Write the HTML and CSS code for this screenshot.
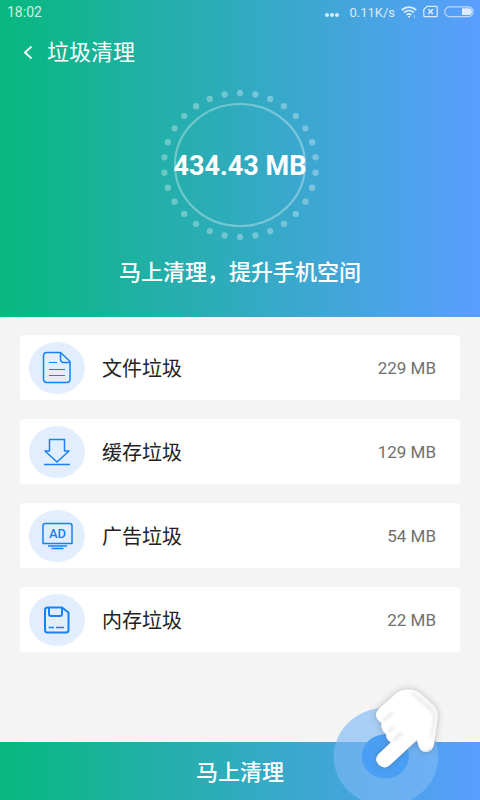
FILE: index.html
```html
<!DOCTYPE html>
<html lang="zh-CN">
<head>
<meta charset="utf-8">
<meta name="viewport" content="width=device-width, initial-scale=1">
<title>垃圾清理</title>
<link rel="stylesheet" href="styles.css">
</head>
<body>
<div class="screen">
  <header class="hero">
    <div class="status">
      <span>18:02</span>
      <div class="status-right">
        <svg class="more" width="14" height="16" viewBox="0 0 14 16" fill="currentColor"><circle cx="2" cy="11" r="2"/><circle cx="7" cy="11" r="2"/><circle cx="12" cy="11" r="2"/></svg>
        <span class="speed">0.11K/s</span>
        <svg width="16" height="14" viewBox="0 0 16 14" fill="none" stroke="currentColor" stroke-width="1.7"><path d="M.8 5C5 1.200 11 1.200 15.200 5M3.200 7.500c2.800-2.500 6.800-2.500 9.600 0M5.600 9.900c1.400-1.200 3.400-1.200 4.800 0"/><path d="M6.500 11h3L8 13z" fill="currentColor" stroke="none"/><path d="M13.500 10v3" stroke-width="1" opacity=".6"/></svg>
        <svg width="15" height="14" viewBox="0 0 15 14" fill="none" stroke="currentColor" stroke-width="1.200"><path d="M4 1.300h9.200q1 0 1 1v8.400q0 1-1 1H1.800q-1 0-1-1V4.500z"/><path d="M5.300 4.300l4.600 4.600M9.900 4.300L5.300 8.900" stroke-width="1.500"/></svg>
        <svg width="30" height="14" viewBox="0 0 30 14"><rect x=".8" y="1.800" width="28.400" height="9.800" rx="4.900" fill="none" stroke="currentColor" stroke-width="1.200" opacity=".75"/><path d="M18 3.300h6.500a3.400 3.400 0 010 6.800H18z" fill="currentColor"/></svg>
      </div>
    </div>
    <div class="title-bar">
      <a class="back" href="#" aria-label="返回"><svg width="10" height="14" viewBox="0 0 10 14" fill="none" stroke="currentColor" stroke-width="1.800"><path d="M8.500 .5L2 6.500l6.500 6"/></svg></a>
      <h1>垃圾清理</h1>
    </div>
    <div class="gauge">
      <svg class="ring" viewBox="0 0 160 150" fill="none" stroke="#fff">
        <ellipse cx="80" cy="75" rx="76" ry="72" pathLength="30" stroke-width="6.300" stroke-linecap="round" stroke-dasharray="0 1" stroke-dashoffset=".5" opacity=".32"/>
        <ellipse cx="80" cy="75" rx="65" ry="61" stroke-width="2.200" opacity=".33"/>
      </svg>
      <strong>434.43 MB</strong>
    </div>
    <p class="tagline">马上清理，提升手机空间</p>
  </header>
  <main>
    <ul class="list">
      <li class="card">
        <span class="badge"><svg viewBox="0 0 56 52"><path d="M18 10.500h13.500l9.500 9v17.500q0 3.500-3.500 3.500H18q-3.500 0-3.500-3.500V14q0-3.500 3.500-3.500z"/><path d="M31.500 10.500V17q0 3.500 3.500 3.500h6"/><path class="thin" d="M20 20.500h8M20 27.500h16M20 33.500h16"/></svg></span>
        <span class="name">文件垃圾</span><span class="size">229 MB</span>
      </li>
      <li class="card">
        <span class="badge"><svg viewBox="0 0 56 52"><path d="M20.500 13.500h15V25h4.500L28 36 16 25h4.500zM15 38.500h26"/></svg></span>
        <span class="name">缓存垃圾</span><span class="size">129 MB</span>
      </li>
      <li class="card">
        <span class="badge"><svg viewBox="0 0 56 52"><path d="M16.500 13.500h24q2.500 0 2.500 2.500v17.500H14V16q0-2.500 2.500-2.500zM19 36h19M22.500 38.500h12"/><text x="28.500" y="28" text-anchor="middle">AD</text></svg></span>
        <span class="name">广告垃圾</span><span class="size">54 MB</span>
      </li>
      <li class="card">
        <span class="badge"><svg viewBox="0 0 56 52"><path class="bold" d="M18.500 13.500H33l6.500 5V36q0 2.500-2.500 2.500H18.500Q16 38.500 16 36V16q0-2.500 2.500-2.500z"/><path class="bold" d="M20 13.500V20q0 2 2 2h9q2 0 2-2v-6.500"/><path d="M19.500 33.500H25M27 33.500h8"/></svg></span>
        <span class="name">内存垃圾</span><span class="size">22 MB</span>
      </li>
    </ul>
  </main>
  <footer class="footer">
    <button class="clean" type="button">马上清理</button>
    <svg class="pointer" viewBox="0 0 480 390" aria-hidden="true">
      <defs>
        <linearGradient id="skin" x1="0" y1="1" x2="1" y2="0"><stop offset="0" stop-color="#fff"/><stop offset=".75" stop-color="#fff"/><stop offset="1" stop-color="#f0f0f0"/></linearGradient>
        <filter id="shadow" x="-20%" y="-20%" width="140%" height="140%"><feDropShadow dx="0" dy="0" stdDeviation="9" flood-color="#555" flood-opacity=".4"/></filter>
        <filter id="soft" x="-30%" y="-30%" width="160%" height="160%"><feGaussianBlur stdDeviation="5"/></filter>
        <clipPath id="hand-clip"><path d="M175 253L213 217Q198 210 198 191Q182 181 184 158Q168 150 168 132Q169 123 177 116L230 69Q240 61 253 59L276 59Q289 60 298 68L340 105Q354 118 353 139L342 223Q338 245 318 246Q300 245 296 228L291 210L211 284Q194 300 177 285Q161 269 175 253Z"/></clipPath>
      </defs>
      <ellipse cx="198" cy="260" rx="157" ry="147" fill="#7db8f5" opacity=".64"/>
      <ellipse cx="196" cy="259" rx="71" ry="66" fill="#4a9ff5"/>
      <path filter="url(#shadow)" fill="url(#skin)" d="M175 253L213 217Q198 210 198 191Q182 181 184 158Q168 150 168 132Q169 123 177 116L230 69Q240 61 253 59L276 59Q289 60 298 68L340 105Q354 118 353 139L342 223Q338 245 318 246Q300 245 296 228L291 210L211 284Q194 300 177 285Q161 269 175 253Z"/>
      <g clip-path="url(#hand-clip)"><g filter="url(#soft)" fill="none" stroke="#e2e2e2">
        <path d="M275 69L334 119Q346 132 342 150L334 204" stroke-width="7" opacity=".8"/>
        <path d="M190 153L217 128M205 186L219 172M220 212L248 187" stroke-width="7"/>
        <path d="M302 243Q320 254 338 235" stroke-width="10"/>
      </g></g>
    </svg>
  </footer>
</div>
</body>
</html>
```
FILE: styles.css
```css
* { box-sizing: border-box; }

body {
  margin: 0;
  background: #f4f4f4;
  color: #222;
  font-family: Roboto, "Noto Sans CJK SC", sans-serif;
}

.screen {
  display: flex;
  flex-direction: column;
  min-height: 100vh;
}

.hero,
.clean {
  background: linear-gradient(90deg, #07b87e, #5a9eff);
  color: #fff;
}

.hero { padding-bottom: 28px; }

.status {
  display: flex;
  justify-content: space-between;
  align-items: center;
  height: 24px;
  padding: 0 6px 0 7px;
  font-size: 14px;
  color: rgba(255, 255, 255, 0.8);
}

.status-right {
  display: flex;
  align-items: center;
  gap: 6px;
}

.more { margin-right: 4px; }
.speed { font-size: 13px; }

.title-bar {
  display: flex;
  align-items: center;
  gap: 14px;
  height: 58px;
  padding-left: 23px;
}

.back {
  display: flex;
  color: inherit;
}

h1 {
  margin: 0;
  font-size: 22px;
  line-height: 32px;
  font-weight: 400;
}

.gauge {
  display: grid;
  place-items: center;
  margin: 8px auto 0;
  width: 160px;
}

.gauge > * { grid-area: 1 / 1; }

.ring {
  display: block;
  width: 100%;
}

.gauge strong {
  padding-top: 2px;
  font-size: 27px;
  line-height: 32px;
  white-space: nowrap;
}

.tagline {
  margin: 17px 0 0;
  font-size: 22px;
  line-height: 32px;
  font-weight: 500;
  text-align: center;
}

main { flex: 1; }

.list {
  display: flex;
  flex-direction: column;
  gap: 19px;
  margin: 0;
  padding: 18px 20px;
  list-style: none;
}

.card {
  display: flex;
  align-items: center;
  height: 65px;
  padding: 0 24px 0 9px;
  border-radius: 4px;
  background: #fff;
}

.badge {
  display: block;
  width: 56px;
  height: 52px;
  border-radius: 50%;
  background: #e2eefd;
}

.badge svg {
  display: block;
  fill: none;
  stroke: #1682f5;
  stroke-width: 1.5px;
  stroke-linejoin: round;
}

.badge .thin { stroke-width: 1px; }
.badge .bold { stroke-width: 2px; }

.badge text {
  fill: #1682f5;
  stroke: none;
  font-size: 13px;
  font-weight: 500;
}

.name {
  flex: 1;
  margin-left: 17px;
  font-size: 20px;
}

.size {
  color: #707070;
  font-size: 17px;
}

.footer { position: relative; }

.clean {
  display: block;
  width: 100%;
  height: 58px;
  border: 0;
  padding: 0 0 2px;
  font-family: inherit;
  font-size: 22px;
  font-weight: 500;
}

.pointer {
  position: absolute;
  right: 0;
  bottom: 0;
  width: 160px;
  height: 130px;
  pointer-events: none;
}
```
